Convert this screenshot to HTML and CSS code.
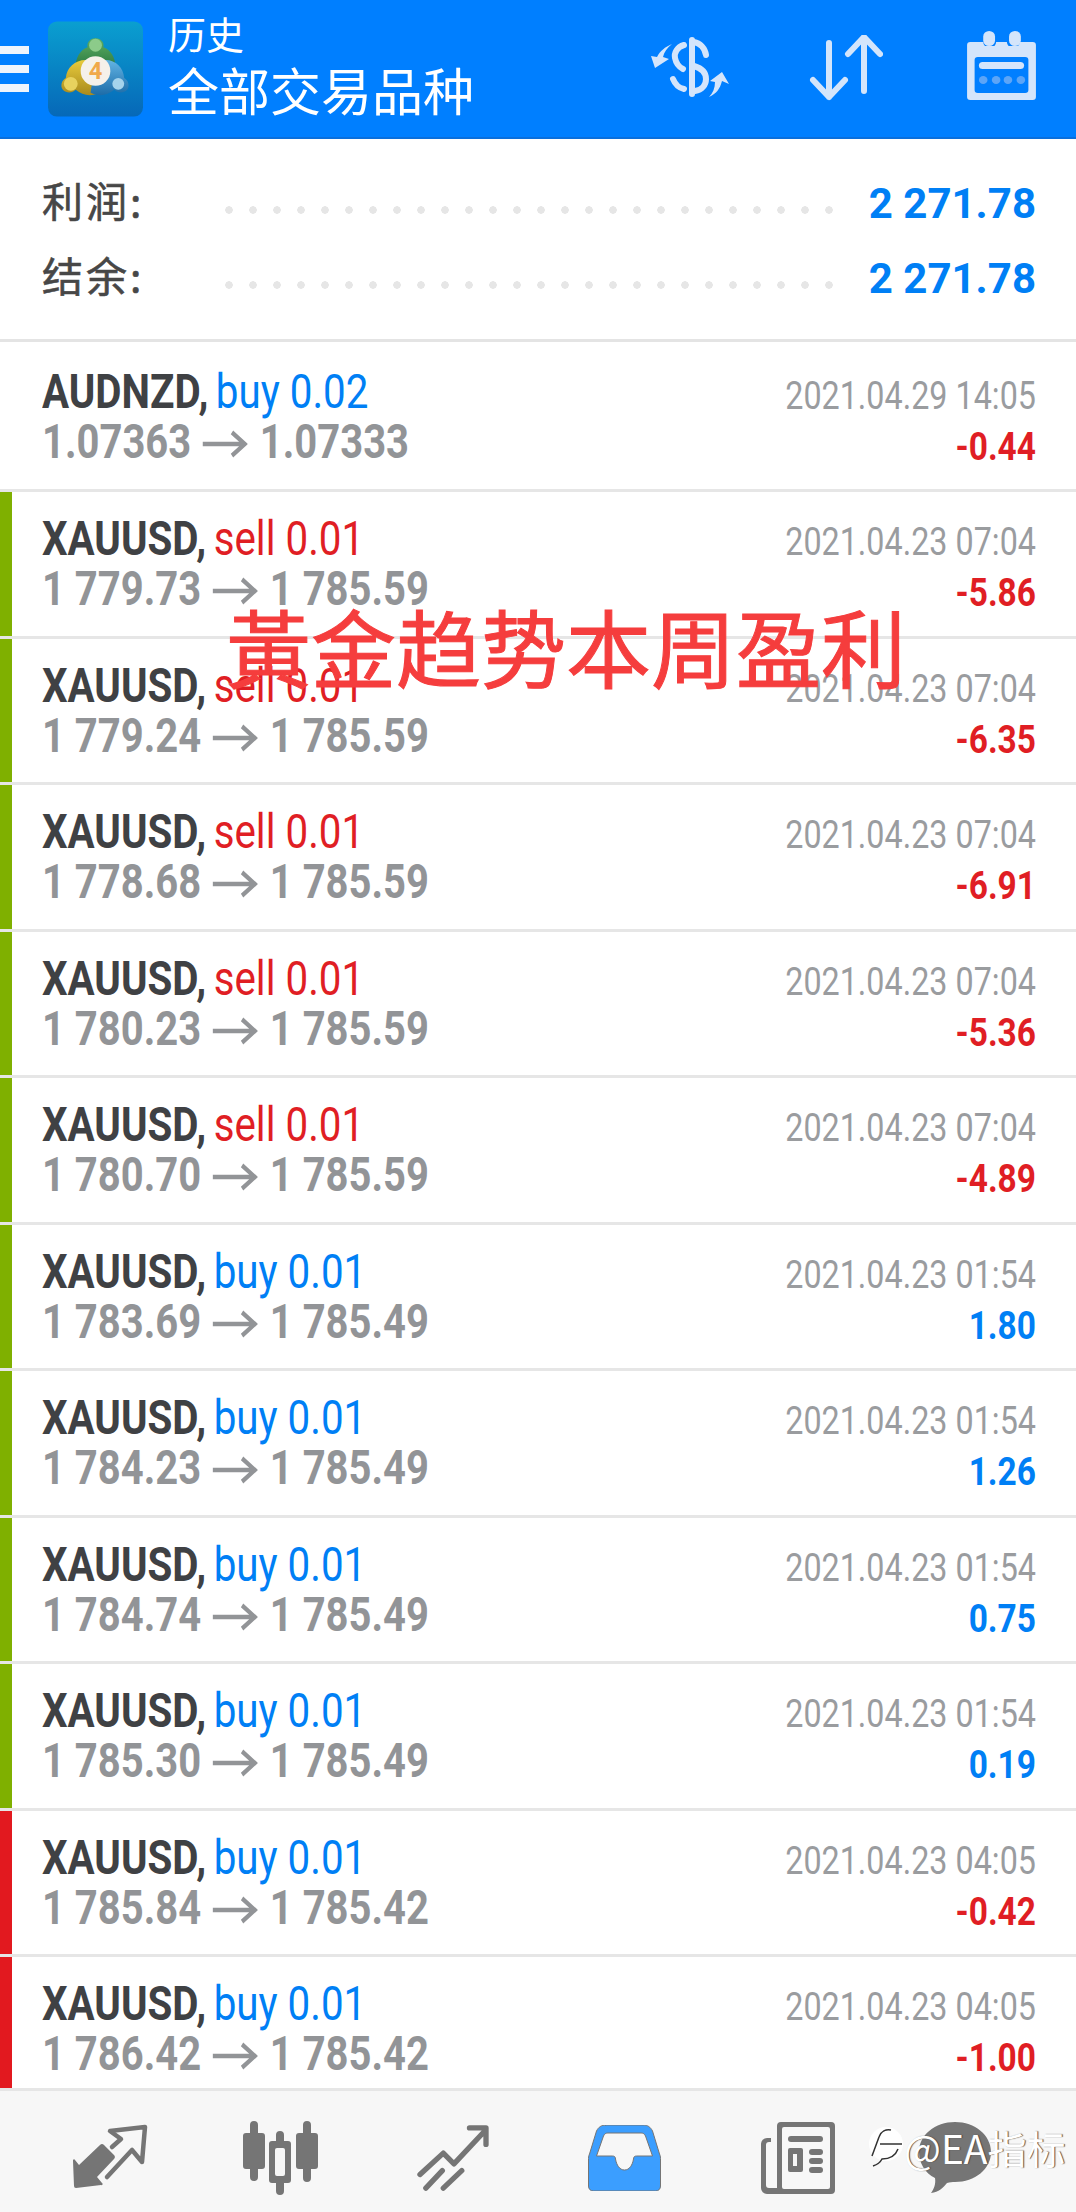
FILE: index.html
```html
<!DOCTYPE html>
<html lang="zh">
<head>
    <meta charset="UTF-8">
    <meta name="viewport" content="width=device-width, initial-scale=1.0">
    <title>历史</title>
    <link rel="stylesheet" href="styles.css">
</head>
<body>

<div class="app">
    <header class="topbar">
        <div class="burger"><span></span><span></span><span></span></div>
        <svg class="logo" viewBox="0 0 96 96">
            <defs>
                <linearGradient id="logoBg" x1="0" y1="0" x2="0" y2="1">
                    <stop offset="0" stop-color="#0a9fd0"/>
                    <stop offset="1" stop-color="#0668b8"/>
                </linearGradient>
                <linearGradient id="logoGreen" x1="0" y1="0" x2="0" y2="1">
                    <stop offset="0" stop-color="#5fae62"/>
                    <stop offset="1" stop-color="#1f6f3c"/>
                </linearGradient>
                <linearGradient id="logoYellow" x1="0" y1="0" x2="0" y2="1">
                    <stop offset="0" stop-color="#e8cb3c"/>
                    <stop offset="1" stop-color="#a88a1e"/>
                </linearGradient>
                <linearGradient id="logoBlue" x1="0" y1="0" x2="0" y2="1">
                    <stop offset="0" stop-color="#62b4e4"/>
                    <stop offset="1" stop-color="#1d6ca8"/>
                </linearGradient>
            </defs>
            <rect width="96" height="96" rx="9" fill="url(#logoBg)"/>
            <path d="M48 17c-6 0-9 5-8 9-8 3-12 11-12 19l14 8h12l14-8c0-8-4-16-12-19 1-4-2-9-8-9z" fill="url(#logoGreen)"/>
            <circle cx="48" cy="24" r="6.5" fill="#8ccb8a"/>
            <path d="M38 39c-11 0-19 8-20 18-4 2-6 8-3 12 4 4 10 3 13 0 7 6 16 7 24 3l-4-27z" fill="url(#logoYellow)"/>
            <circle cx="23" cy="63" r="7" fill="#e8d25e"/>
            <path d="M58 39c11 0 18 8 19 18 4 2 6 8 3 12-4 4-10 3-13 0-7 6-16 7-24 3l4-27z" fill="url(#logoBlue)"/>
            <circle cx="71" cy="63" r="6" fill="#a5d3ec"/>
            <circle cx="48" cy="50" r="15" fill="#f5f1ea"/>
            <text x="48" y="58" class="logo-four">4</text>
        </svg>
        <div class="topbar-title">
            <div class="topbar-small">历史</div>
            <div class="topbar-big">全部交易品种</div>
        </div>
        <div class="topbar-icons">
            <svg class="icon-money" viewBox="0 0 78 60">
                <path d="M41 3v54" stroke-width="6"/>
                <path d="M43 5c6 1 11 6 12 13M33 8c-7 2-10 8-9 13 1 5 4 9 8 11M43 29c7 2 12 6 12 13 0 6-4 11-11 12M22 42c2 5 6 9 11 10" stroke-width="6"/>
                <path class="solid" d="M21 7C14 10 9 14 6 20L0 19 4 31 18 22 12 20C13 15 16 11 21 7zM58 60C62 56 64 51 64 45L59 44 71 35 78 47 71 44C69 52 65 57 58 60z"/>
            </svg>
            <svg class="icon-sort" viewBox="0 0 72 66">
                <path d="M19 8v54M3 45l16 17 16-17M54 2v54M38 19L54 2l16 17" stroke-width="6"/>
            </svg>
            <svg class="icon-calendar" viewBox="0 0 66 70" preserveAspectRatio="none">
                <path class="solid" d="M4 11h12a6 6 0 0 0 12 0h10a6 6 0 0 0 12 0h12a3 3 0 0 1 3 3v52a3 3 0 0 1-3 3H4a3 3 0 0 1-3-3V14a3 3 0 0 1 3-3zm4 18v30a3 3 0 0 0 3 3h44a3 3 0 0 0 3-3V29a3 3 0 0 0-3-3H11a3 3 0 0 0-3 3z" fill-rule="evenodd"/>
                <path class="solid" d="M10 15h46v11H10z"/>
                <rect class="solid" x="16" y="0" width="11" height="15" rx="5.5"/>
                <rect class="solid" x="40" y="0" width="11" height="15" rx="5.5"/>
                <rect class="solid" x="12" y="31" width="42" height="7" rx="3.5"/>
                <circle class="dot" cx="16" cy="49" r="4"/>
                <circle class="dot" cx="28" cy="49" r="4"/>
                <circle class="dot" cx="39" cy="49" r="4"/>
                <circle class="dot" cx="51" cy="49" r="4"/>
            </svg>
        </div>
    </header>

    <section class="summary">
        <div class="summary-row">
            <span class="summary-label">利润:</span>
            <span class="dots"></span>
            <span class="summary-value">2 271.78</span>
        </div>
        <div class="summary-row">
            <span class="summary-label">结余:</span>
            <span class="dots"></span>
            <span class="summary-value">2 271.78</span>
        </div>
    </section>

    <div class="deals" id="deals"></div>

    <nav class="tabbar">
        <svg class="tab tab-quotes" viewBox="0 0 76 68">
            <path class="solid" d="M27 21a3 3 0 0 1 4 0l10 10a3 3 0 0 1 0 4L24 53l5 6a1 1 0 0 1-1 2L3 64a2 2 0 0 1-2-2L0 37a1 1 0 0 1 2-1l4 5z"/>
            <path class="line" d="M39 23l9-8-11-8 35-4-3 35-10-12-25 27" stroke-width="4.5"/>
        </svg>
        <svg class="tab tab-chart" viewBox="0 0 76 74">
            <path class="solid" d="M8 12V4a4 4 0 0 1 8 0v8h4a3 3 0 0 1 3 3v30a3 3 0 0 1-3 3h-4v8a4 4 0 0 1-8 0v-8H4a3 3 0 0 1-3-3V15a3 3 0 0 1 3-3z"/>
            <path class="solid" d="M61 12V4a4 4 0 0 1 8 0v8h4a3 3 0 0 1 3 3v30a3 3 0 0 1-3 3h-4v9a4 4 0 0 1-8 0v-9h-4a3 3 0 0 1-3-3V15a3 3 0 0 1 3-3z"/>
            <path class="solid" fill-rule="evenodd" d="M34 20v-6a4 4 0 0 1 8 0v6h4a3 3 0 0 1 3 3v36a3 3 0 0 1-3 3h-4v8a4 4 0 0 1-8 0v-8h-4a3 3 0 0 1-3-3V23a3 3 0 0 1 3-3zm1 7a2 2 0 0 0-2 2v24a2 2 0 0 0 2 2h6a2 2 0 0 0 2-2V29a2 2 0 0 0-2-2z"/>
        </svg>
        <svg class="tab tab-trade" viewBox="0 0 72 68">
            <path class="line" d="M2 51l24-22 11 11 31-33M53 3h17v17M8 65l17-18M26 65l19-18" stroke-width="5.5"/>
        </svg>
        <svg class="tab tab-history" viewBox="0 0 72 66">
            <path fill="#3b9eff" fill-rule="evenodd" d="M17 0h38c4 0 7 2 9 6l7 23c1 2 1 4 1 6v26c0 3-2 5-5 5H5c-3 0-5-2-5-5V35c0-2 0-4 1-6L8 6c2-4 5-6 9-6zm2 8c-2 0-3 1-4 3L8 31h16c2 0 3 1 3 3 1 6 4 11 9 11s8-5 9-11c0-2 1-3 3-3h16l-7-20c-1-2-2-3-4-3z"/>
        </svg>
        <svg class="tab tab-news" viewBox="0 0 74 72">
            <path class="solid" fill-rule="evenodd" d="M20 0h50a4 4 0 0 1 4 4v64a4 4 0 0 1-4 4H6a6 6 0 0 1-6-6V22a6 6 0 0 1 6-6h4v4H8a3 3 0 0 0-3 3v40a3 3 0 0 0 3 3h8V4a4 4 0 0 1 4-4zm3 5a2 2 0 0 0-2 2v58a2 2 0 0 0 2 2h44a2 2 0 0 0 2-2V7a2 2 0 0 0-2-2z"/>
            <rect class="solid" x="27" y="14" width="35" height="6" rx="3"/>
            <path class="solid" fill-rule="evenodd" d="M29 26h11a2 2 0 0 1 2 2v20a2 2 0 0 1-2 2H29a2 2 0 0 1-2-2V28a2 2 0 0 1 2-2zm3 6v12h4V32z"/>
            <rect class="solid" x="48" y="27" width="14" height="6" rx="3"/>
            <rect class="solid" x="48" y="36" width="14" height="6" rx="3"/>
            <rect class="solid" x="48" y="45" width="14" height="6" rx="3"/>
        </svg>
        <svg class="tab tab-chat" viewBox="0 0 72 72">
            <path class="solid" d="M36 0c20 0 36 13 36 30S56 60 36 60c-3 0-5 0-8 1-4 5-8 9-16 10 3-4 5-9 4-15C6 51 0 41 0 30 0 13 16 0 36 0z"/>
        </svg>
    </nav>

    <div class="headline">黃金趋势本周盈利</div>
    <div class="watermark">
        <svg class="watermark-icon" viewBox="0 0 36 44">
            <circle class="watermark-blob" cx="18" cy="19" r="17"/>
            <path d="M4 31L11 12C13 6 18 4 23 5M12 19H34M30 24C27 32 20 34 14 34 12 38 8 40 5 41" stroke-width="1.5"/>
        </svg>
        <span>@EA指标</span>
    </div>
</div>

<script>
    const deals = [
        { symbol: 'AUDNZD', side: 'buy', lots: '0.02', open: '1.07363', close: '1.07333', time: '2021.04.29 14:05', profit: '-0.44', bar: '' },
        { symbol: 'XAUUSD', side: 'sell', lots: '0.01', open: '1 779.73', close: '1 785.59', time: '2021.04.23 07:04', profit: '-5.86', bar: 'green' },
        { symbol: 'XAUUSD', side: 'sell', lots: '0.01', open: '1 779.24', close: '1 785.59', time: '2021.04.23 07:04', profit: '-6.35', bar: 'green' },
        { symbol: 'XAUUSD', side: 'sell', lots: '0.01', open: '1 778.68', close: '1 785.59', time: '2021.04.23 07:04', profit: '-6.91', bar: 'green' },
        { symbol: 'XAUUSD', side: 'sell', lots: '0.01', open: '1 780.23', close: '1 785.59', time: '2021.04.23 07:04', profit: '-5.36', bar: 'green' },
        { symbol: 'XAUUSD', side: 'sell', lots: '0.01', open: '1 780.70', close: '1 785.59', time: '2021.04.23 07:04', profit: '-4.89', bar: 'green' },
        { symbol: 'XAUUSD', side: 'buy', lots: '0.01', open: '1 783.69', close: '1 785.49', time: '2021.04.23 01:54', profit: '1.80', bar: 'green' },
        { symbol: 'XAUUSD', side: 'buy', lots: '0.01', open: '1 784.23', close: '1 785.49', time: '2021.04.23 01:54', profit: '1.26', bar: 'green' },
        { symbol: 'XAUUSD', side: 'buy', lots: '0.01', open: '1 784.74', close: '1 785.49', time: '2021.04.23 01:54', profit: '0.75', bar: 'green' },
        { symbol: 'XAUUSD', side: 'buy', lots: '0.01', open: '1 785.30', close: '1 785.49', time: '2021.04.23 01:54', profit: '0.19', bar: 'green' },
        { symbol: 'XAUUSD', side: 'buy', lots: '0.01', open: '1 785.84', close: '1 785.42', time: '2021.04.23 04:05', profit: '-0.42', bar: 'red' },
        { symbol: 'XAUUSD', side: 'buy', lots: '0.01', open: '1 786.42', close: '1 785.42', time: '2021.04.23 04:05', profit: '-1.00', bar: 'red' }
    ];

    const arrow = '<svg class="arrow" viewBox="0 0 46 24"><path d="M0 12h43M30 2l13 10-13 10"/></svg>';

    document.getElementById('deals').innerHTML = deals.map(function (d) {
        const profitClass = d.profit.charAt(0) === '-' ? 'loss' : 'gain';
        return '<div class="deal ' + d.bar + '">' +
            '<div class="deal-left">' +
                '<div class="deal-title"><b>' + d.symbol + ',</b> <span class="' + d.side + '">' + d.side + ' ' + d.lots + '</span></div>' +
                '<div class="deal-prices">' + d.open + ' ' + arrow + ' ' + d.close + '</div>' +
            '</div>' +
            '<div class="deal-right">' +
                '<div class="deal-time">' + d.time + '</div>' +
                '<div class="deal-profit ' + profitClass + '">' + d.profit + '</div>' +
            '</div>' +
        '</div>';
    }).join('');
</script>

</body>
</html>
```

FILE: styles.css
```css
html, body {
    margin: 0;
    padding: 0;
    background: #ffffff;
}
.app {
    position: relative;
    width: 1076px;
    height: 2212px;
    display: flex;
    flex-direction: column;
    overflow: hidden;
    font-family: Roboto, "Noto Sans CJK SC", sans-serif;
}

/* top bar */
.topbar {
    height: 137px;
    flex: none;
    display: flex;
    align-items: center;
    background: #007fff;
    border-bottom: 2px solid #0a6fdc;
}
.burger {
    width: 29px;
    margin-right: 19px;
    display: flex;
    flex-direction: column;
    gap: 11px;
}
.burger span {
    height: 8px;
    background: #eef4fc;
}
.logo {
    width: 95px;
    height: 96px;
    flex: none;
}
.logo-four {
    font-size: 24px;
    font-weight: 700;
    fill: #f0a94a;
    text-anchor: middle;
}
.topbar-title {
    margin-left: 25px;
    margin-top: -9px;
    color: #ffffff;
    font-family: "Noto Sans CJK SC", sans-serif;
}
.topbar-small {
    font-size: 38px;
    line-height: 50px;
}
.topbar-big {
    font-size: 51px;
    line-height: 62px;
}
.topbar-icons {
    margin-left: auto;
    margin-right: 39px;
    display: flex;
    align-items: center;
}
.topbar-icons svg {
    fill: none;
    stroke: #d4e5fb;
    stroke-linecap: round;
    stroke-linejoin: round;
}
.topbar-icons .solid {
    fill: #d4e5fb;
    stroke: none;
}
.topbar-icons .dot {
    fill: #5ca5f7;
    stroke: none;
}
.icon-money {
    width: 78px;
    height: 60px;
    margin-top: -4px;
}
.icon-sort {
    width: 74px;
    height: 66px;
    margin-left: 80px;
    margin-top: -2px;
}
.icon-calendar {
    width: 71px;
    height: 70px;
    margin-left: 83px;
    margin-top: -6px;
}

/* totals */
.summary {
    height: 203px;
    flex: none;
    box-sizing: border-box;
    padding: 27px 40px 0 42px;
    border-bottom: 3px solid #e4e4e4;
}
.summary-row {
    height: 75px;
    display: flex;
    align-items: center;
}
.summary-label {
    width: 183px;
    margin-top: -10px;
    flex: none;
    color: #474747;
    font-family: "Noto Sans CJK SC", sans-serif;
    font-size: 41px;
    letter-spacing: 3px;
    line-height: 50px;
    -webkit-text-stroke: 0.6px #474747;
}
.dots {
    width: 608px;
    height: 8px;
    margin-top: 12px;
    background: radial-gradient(circle at 4px 4px, #e6e6e6 3.5px, transparent 4px) 0 0 / 24px 8px repeat-x;
}
.summary-value {
    margin-left: auto;
    color: #007ff5;
    font-size: 42px;
    font-weight: 700;
    line-height: 50px;
    white-space: nowrap;
}

/* deals */
.deals {
    flex: 1;
    min-height: 0;
    overflow: hidden;
}
.deal {
    height: 146.5px;
    box-sizing: border-box;
    position: relative;
    display: flex;
    justify-content: space-between;
    border-bottom: 3px solid #e6e6e6;
    padding: 0 40px 0 42px;
}
.deal:first-child {
    height: 150px;
}
.deal.green::before, .deal.red::before {
    content: "";
    position: absolute;
    left: 0;
    top: 0;
    bottom: 0;
    width: 12px;
}
.deal.green::before {
    background: #7fb000;
}
.deal.red::before {
    background: #e2191f;
}
.deal-left, .deal-right {
    white-space: nowrap;
}
.deal-left {
    padding-top: 21px;
    transform: scaleX(0.84);
    transform-origin: left top;
}
.deal-right {
    padding-top: 25px;
    text-align: right;
    transform-origin: right top;
}
.deal:first-child .deal-left {
    padding-top: 24px;
}
.deal:first-child .deal-right {
    padding-top: 29px;
}
.deal-title {
    font-size: 48px;
    line-height: 51px;
}
.deal-title b {
    color: #3f4144;
    font-weight: 700;
}
.deal-title .buy, .deal-title .sell {
    margin-left: -3px;
}
.deal-title .buy {
    color: #007ff5;
}
.deal-title .sell {
    color: #e01e24;
}
.deal-prices {
    color: #929497;
    font-size: 47.6px;
    font-weight: 700;
    line-height: 51px;
}
.arrow {
    width: 54px;
    height: 28px;
    margin: 0 2px;
    fill: none;
    stroke: #929497;
    stroke-width: 4;
}
.deal-time {
    color: #9a9c9f;
    font-size: 38px;
    line-height: 50px;
    transform: scaleX(0.85);
    transform-origin: right top;
}
.deal-profit {
    margin-top: 1px;
    font-size: 38px;
    font-weight: 700;
    line-height: 50px;
    transform: scaleX(0.88);
    transform-origin: right top;
}
.deal-profit.loss {
    color: #e01e24;
}
.deal-profit.gain {
    color: #007ff5;
}

/* bottom tabs */
.tabbar {
    height: 124px;
    flex: none;
    box-sizing: border-box;
    display: flex;
    align-items: center;
    padding-top: 12px;
    background: #f7f7f7;
    border-top: 3px solid #e6e6e6;
}
.tab {
    flex: none;
    fill: none;
    stroke: #757575;
    stroke-linecap: round;
    stroke-linejoin: round;
}
.tab .solid {
    fill: #757575;
    stroke: none;
}
.tab-quotes {
    width: 76px;
    height: 68px;
    margin-left: 73px;
}
.tab-chart {
    width: 76px;
    height: 74px;
    margin-left: 93px;
}
.tab-trade {
    width: 72px;
    height: 66px;
    margin-left: 99px;
}
.tab-history {
    width: 73px;
    height: 66px;
    margin-left: 99px;
}
.tab-news {
    width: 76px;
    height: 72px;
    margin-left: 99px;
}
.tab-chat {
    width: 72px;
    height: 72px;
    margin-left: 83px;
}

/* text stamped over the screenshot */
.headline {
    position: absolute;
    left: 226px;
    top: 590px;
    color: #f53d3d;
    font-family: "Noto Sans CJK SC", sans-serif;
    font-size: 85px;
    line-height: 110px;
    white-space: nowrap;
    -webkit-text-stroke: 1px #f53d3d;
}
.watermark {
    position: absolute;
    left: 868px;
    top: 2125px;
    display: flex;
    align-items: center;
    color: #ffffff;
    font-family: "Noto Sans CJK SC", sans-serif;
    font-size: 39px;
    line-height: 44px;
    text-shadow: 1px 0 1px #444444;
    white-space: nowrap;
}
.watermark-icon {
    width: 36px;
    height: 44px;
    fill: none;
    stroke: #333333;
}
.watermark-blob {
    fill: #ffffff;
    stroke: none;
}
```
